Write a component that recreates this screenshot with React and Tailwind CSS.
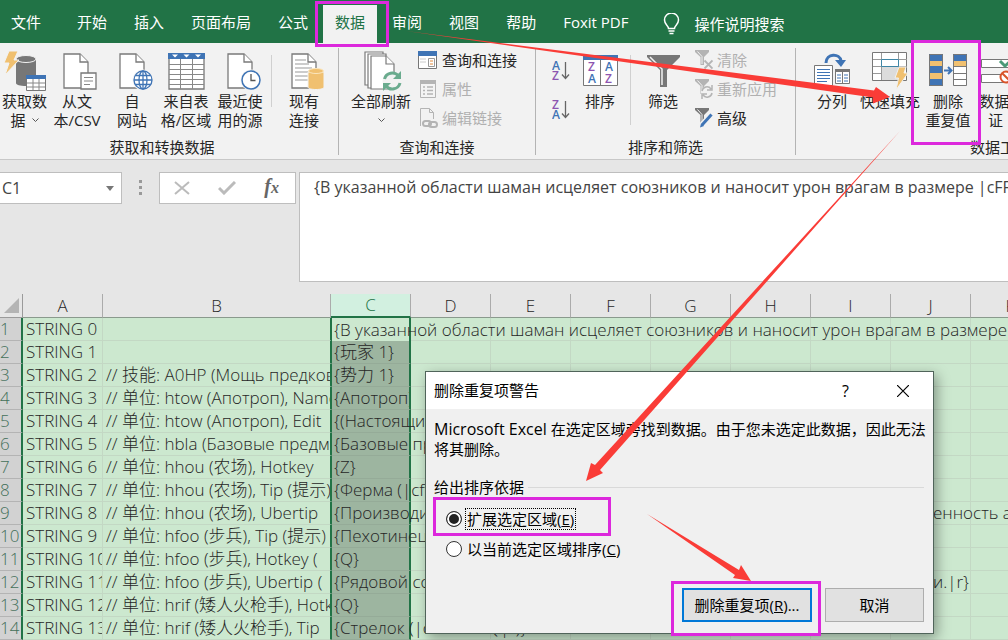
const TABS = ['开始', '插入', '页面布局', '公式', '数据', '审阅', '视图', '帮助', 'Foxit PDF']

const COLUMNS = ['A', 'B', 'C', 'D', 'E', 'F', 'G', 'H', 'I', 'J', 'K']

const FORMULA =
  '{В указанной области шаман исцеляет союзников и наносит урон врагам в размере |cFF00'

const ROWS = [
  { a: 'STRING 0', b: '', c: '{В указанной области шаман исцеляет союзников и наносит урон врагам в размере' },
  { a: 'STRING 1', b: '', c: '{玩家 1}' },
  { a: 'STRING 2', b: '// 技能: A0HP (Мощь предков)', c: '{势力 1}' },
  { a: 'STRING 3', b: '// 单位: htow (Апотроп), Name', c: '{Апотроп}', clip: true },
  { a: 'STRING 4', b: '// 单位: htow (Апотроп), Edit', c: '{(Настоящий)}' },
  { a: 'STRING 5', b: '// 单位: hbla (Базовые предметы)', c: '{Базовые предметы}' },
  { a: 'STRING 6', b: '// 单位: hhou (农场), Hotkey', c: '{Z}' },
  { a: 'STRING 7', b: '// 单位: hhou (农场), Tip (提示)', c: '{Ферма (|cffffcc00Z|r)}' },
  { a: 'STRING 8', b: '// 单位: hhou (农场), Ubertip', c: '{Производит', j: 'енность армии' },
  { a: 'STRING 9', b: '// 单位: hfoo (步兵), Tip (提示)', c: '{Пехотинец' },
  { a: 'STRING 10', b: '// 单位: hfoo (步兵), Hotkey (', c: '{Q}' },
  { a: 'STRING 11', b: '// 单位: hfoo (步兵), Ubertip (', c: '{Рядовой солдат', j: 'и.|r}' },
  { a: 'STRING 12', b: '// 单位: hrif (矮人火枪手), Hotkey', c: '{Q}' },
  { a: 'STRING 13', b: '// 单位: hrif (矮人火枪手), Tip', c: '{Стрелок (|cffffcc00Q|r)}' },
  { a: 'STRING 14', b: '', c: '' },
]

export default function App() {
  return (
    <div className="relative flex h-screen flex-col overflow-hidden bg-[#e6e6e6] font-['Open_Sans','Noto_Sans_CJK_SC',sans-serif] text-[15px] text-[#262626]">
      <TabBar />
      <Ribbon />
      <FormulaBar />
      <Sheet />
      <Dialog />
      <Annotations />
    </div>
  )
}

function TabBar() {
  return (
    <nav className="flex h-[43px] shrink-0 items-end gap-[3px] bg-[#217346] text-white">
      <button className="mr-[9px] h-[38px] pr-3 pl-[11px] pb-1 whitespace-nowrap">文件</button>
      {TABS.map((tab) => (
        <button
          key={tab}
          className={
            tab === '数据'
              ? 'h-[38px] bg-[#f2f2f2] px-3 pb-1 whitespace-nowrap text-[#217346]'
              : 'h-[38px] px-3 pb-1 whitespace-nowrap'
          }
        >
          {tab}
        </button>
      ))}
      <button className="ml-5 flex h-[38px] items-center gap-[14px] whitespace-nowrap">
        <svg width="17" height="22" viewBox="0 0 17 22" fill="none" stroke="#fff" strokeWidth="1.5">
          <path d="M5.500 15.500c0-3-4-4-4-8.500a7 7 0 0 1 14 0c0 4.500-4 5.500-4 8.500zM5.500 18h6M6.500 20.500h4" />
        </svg>
        操作说明搜索
      </button>
    </nav>
  )
}

function Ribbon() {
  return (
    <div className="flex h-[117px] shrink-0 overflow-hidden border-b border-[#c8c8c8] bg-[#f2f2f2] pt-[5px] pb-1">
      <Group label="获取和转换数据" className="w-[339px]" labelClass="pr-[14px]">
        <BigButton icon={<GetDataIcon />} lines={['获取数', '据']} menu className="w-[49px]" />
        <BigButton icon={<TextFileIcon />} lines={['从文', '本/CSV']} className="w-[56px]" />
        <BigButton icon={<WebIcon />} lines={['自', '网站']} className="w-[54px]" />
        <BigButton icon={<TableIcon />} lines={['来自表', '格/区域']} className="w-[54px]" />
        <BigButton icon={<RecentIcon />} lines={['最近使', '用的源']} className="w-[54px]" />
        <Divider className="mx-1" />
        <BigButton icon={<ConnectionIcon />} lines={['现有', '连接']} className="w-[56px]" />
      </Group>
      <Group label="查询和连接" className="w-[197px]">
        <BigButton icon={<RefreshIcon />} lines={['全部刷新', '']} menu className="ml-2 w-[68px]" />
        <div className="flex flex-col gap-[9px] pt-[2px] pl-[3px]">
          <SmallButton icon={<QueriesIcon />}>查询和连接</SmallButton>
          <SmallButton icon={<PropertiesIcon />} disabled>属性</SmallButton>
          <SmallButton icon={<EditLinkIcon />} disabled>编辑链接</SmallButton>
        </div>
      </Group>
      <Group label="排序和筛选" className="w-[260px]">
        <div className="flex flex-col gap-[17px] pt-3 pl-4">
          <button aria-label="升序"><SortIcon top="A" bottom="Z" /></button>
          <button aria-label="降序"><SortIcon top="Z" bottom="A" /></button>
        </div>
        <BigButton icon={<SortDialogIcon />} lines={['排序']} className="w-[60px]" />
        <Divider tall />
        <BigButton icon={<FunnelIcon />} lines={['筛选']} className="w-[64px]" />
        <div className="flex flex-col gap-[9px] pt-[2px]">
          <SmallButton icon={<SmallFunnel kind="clear" />} disabled>清除</SmallButton>
          <SmallButton icon={<SmallFunnel kind="reapply" />} disabled>重新应用</SmallButton>
          <SmallButton icon={<SmallFunnel kind="advanced" />}>高级</SmallButton>
        </div>
      </Group>
      <div className="flex min-w-0 flex-1 flex-col overflow-hidden">
        <div className="flex flex-1 pl-[7px]">
          <BigButton icon={<SplitIcon />} lines={['分列']} className="w-[58px]" />
          <BigButton icon={<FlashFillIcon />} lines={['快速填充']} className="w-[58px]" />
          <BigButton icon={<DuplicatesIcon />} lines={['删除', '重复值']} className="w-[58px]" />
          <BigButton icon={<ValidationIcon />} lines={['数据验', '证']} menu className="w-[50px]" />
        </div>
        <div className="h-5 pl-[174px] leading-6 whitespace-nowrap">数据工具</div>
      </div>
    </div>
  )
}

function Group({ label, className, labelClass = '', children }) {
  return (
    <div className={`flex shrink-0 flex-col border-r border-[#b4b4b4] ${className}`}>
      <div className="flex flex-1">{children}</div>
      <div className={`h-5 text-center leading-6 ${labelClass}`}>{label}</div>
    </div>
  )
}

function Divider({ tall, className = '' }) {
  return <div className={`mt-[7px] w-px bg-[#d0d0d0] ${tall ? 'h-[70px]' : 'h-[52px]'} ${className}`} />
}

function BigButton({ icon, lines, menu, className }) {
  return (
    <button className={`flex shrink-0 flex-col items-center pt-[2px] leading-[19px] whitespace-nowrap ${className}`}>
      <span className="flex h-[42px] items-center">{icon}</span>
      <span>{lines[0]}</span>
      {lines.length > 1 && (
        <span className="flex h-[19px] items-center gap-[6px]">
          {lines[1]}
          {menu && <Chevron />}
        </span>
      )}
    </button>
  )
}

function SmallButton({ icon, disabled, children }) {
  return (
    <button
      disabled={disabled}
      className="flex h-5 items-center gap-1 leading-5 whitespace-nowrap disabled:text-[#b0b0b0]"
    >
      {icon}
      {children}
    </button>
  )
}

function FormulaBar() {
  return (
    <div className="flex h-[134px] shrink-0 items-start pt-3">
      <div className="flex h-8 w-[122px] items-center border border-l-0 border-[#bebebe] bg-white pr-[7px]">
        <input
          aria-label="名称框"
          defaultValue="C1"
          className="w-full min-w-0 pl-[2px] text-base text-[#444] outline-none"
        />
        <button aria-label="打开名称框">
          <svg width="8" height="5" viewBox="0 0 8 5"><path d="M0 0h8L4 5z" fill="#777" /></svg>
        </button>
      </div>
      <svg className="mx-[17px] mt-[8px] shrink-0" width="3" height="15" viewBox="0 0 3 15" fill="#999">
        <path d="M0 0h3v3H0zM0 6h3v3H0zM0 12h3v3H0z" />
      </svg>
      <div className="flex h-8 w-[137px] items-center justify-between border border-[#bebebe] bg-white pr-4 pl-[14px]">
        <button aria-label="取消输入">
          <svg width="16" height="14" viewBox="0 0 16 14" stroke="#bbb" strokeWidth="2"><path d="M1 1l14 12M15 1L1 13" /></svg>
        </button>
        <button aria-label="输入">
          <svg width="18" height="14" viewBox="0 0 18 14" fill="none" stroke="#bbb" strokeWidth="3"><path d="M1 7l5 5L17 1" /></svg>
        </button>
        <button aria-label="插入函数" className="font-['Liberation_Serif',serif] text-xl leading-5 font-bold text-[#666] italic">
          f<span className="text-base">x</span>
        </button>
      </div>
      <textarea
        aria-label="编辑栏"
        wrap="off"
        defaultValue={FORMULA}
        className="ml-[3px] h-[110px] min-w-0 flex-1 resize-none overflow-hidden border border-r-0 border-[#bebebe] bg-white px-[14px] py-1 text-base leading-5 text-[#444] outline-none"
      />
    </div>
  )
}

function Sheet() {
  return (
    <div className="min-h-0 flex-1 overflow-hidden">
      <table className="w-[1051px] table-fixed border-separate border-spacing-0 font-['Open_Sans','Noto_Sans_CJK_SC',sans-serif] text-[17px] leading-[22px] font-light">
        <colgroup>
          <col className="w-[23px]" />
          <col className="w-[80px]" />
          <col className="w-[228px]" />
          {COLUMNS.slice(2).map((name) => (
            <col key={name} className="w-[80px]" />
          ))}
        </colgroup>
        <thead>
          <tr className="h-[23px]">
            <th className="border-r border-b border-[#9a9a9a] p-0">
              <svg className="ml-1" width="15" height="15" viewBox="0 0 15 15"><path d="M15 0v15H0z" fill="#b4b4b4" /></svg>
            </th>
            {COLUMNS.map((name) => (
              <th
                key={name}
                className={
                  name === 'C'
                    ? 'border-r border-b-2 border-r-[#ababab] border-b-[#217346] bg-[#d2f0e0] p-0 font-light text-[#217346]'
                    : 'border-r border-b border-r-[#ababab] border-b-[#8a9a8d] p-0 font-light'
                }
              >
                {name}
              </th>
            ))}
          </tr>
        </thead>
        <tbody className="bg-[#cce8cf]">
          {ROWS.map((row, i) => (
            <tr key={row.a} className="h-[23px] whitespace-nowrap">
              <th className="overflow-hidden border-r-2 border-b border-r-[#217346] border-b-[#b4b4b4] bg-[#d2d2d2] p-0 text-left font-light text-[#44705a]">
                {i + 1}
              </th>
              <td className="overflow-hidden border-r border-b border-[#c3d8c4] p-0 pl-[3px]">{row.a}</td>
              <td className="overflow-hidden border-r border-b border-r-[#217346] border-b-[#c3d8c4] p-0 pl-[3px]">{row.b}</td>
              <td
                className={
                  i === 0
                    ? 'border-r-2 border-l border-[#217346] p-0 pl-[2px]'
                    : 'border-r-2 border-b border-l border-x-[#217346] border-b-[#95ab98] bg-[#9db5a0] p-0 pl-[2px]'
                }
              >
                <div className={row.clip ? 'overflow-hidden' : 'relative w-0'}>{row.c}</div>
              </td>
              {COLUMNS.slice(3).map((name) => (
                <td key={name} className="border-r border-b border-[#c3d8c4] p-0">
                  {name === 'J' && row.j && <div className="relative w-0 pl-[42px]">{row.j}</div>}
                </td>
              ))}
            </tr>
          ))}
        </tbody>
      </table>
    </div>
  )
}

function Dialog() {
  return (
    <div
      role="dialog"
      aria-labelledby="dialog-title"
      className="absolute top-[371px] left-[425px] w-[509px] border border-[#50645a] bg-[#f0f0f0] text-black shadow-[3px_4px_12px_rgba(0,0,0,0.35)]"
    >
      <div className="flex h-[37px] items-center bg-white pr-6 pl-2">
        <h2 id="dialog-title" className="flex-1">删除重复项警告</h2>
        <button aria-label="帮助" className="mr-12 text-base">?</button>
        <button aria-label="关闭">
          <svg width="12" height="12" viewBox="0 0 12 12" stroke="#000" strokeWidth="1.2"><path d="M0 0l12 12M12 0L0 12" /></svg>
        </button>
      </div>
      <div className="pt-[10px] pr-[9px] pb-[11px] pl-2">
        <p className="leading-5 whitespace-nowrap">
          <span className="text-base leading-5">Microsoft Excel </span>
          在选定区域旁找到数据。由于您未选定此数据，因此无法
          <br />
          将其删除。
        </p>
        <fieldset className="mt-[18px]">
          <legend className="flex w-full items-center gap-1 leading-5 after:h-px after:flex-1 after:bg-[#d9d9d9]">
            给出排序依据
          </legend>
          <div className="mt-[11px] flex flex-col gap-2 pl-3">
            <Choice id="expand" defaultChecked text="扩展选定区域" hotkey="E" />
            <Choice id="current" text="以当前选定区域排序" hotkey="C" />
          </div>
        </fieldset>
        <div className="mt-7 flex justify-end gap-[13px]">
          <button className="h-[34px] w-[130px] border-2 border-[#0078d7] bg-[#e1e1e1]">
            删除重复项(<u>R</u>)...
          </button>
          <button className="h-[34px] w-[99px] border border-[#adadad] bg-[#e1e1e1]">取消</button>
        </div>
      </div>
    </div>
  )
}

function Choice({ id, text, hotkey, defaultChecked }) {
  return (
    <div className="flex items-center gap-[3px]">
      <input
        type="radio"
        name="scope"
        id={id}
        defaultChecked={defaultChecked}
        className="size-4 appearance-none rounded-full border border-[#333] bg-white checked:bg-[#222] checked:shadow-[inset_0_0_0_2px_#fff]"
      />
      <label
        htmlFor={id}
        className={
          defaultChecked
            ? 'border border-dotted border-black px-px leading-5'
            : 'border border-transparent px-px leading-5'
        }
      >
        {text}(<u>{hotkey}</u>)
      </label>
    </div>
  )
}

// magenta frames and red arrows pointing through the steps
function Annotations() {
  return (
    <div className="pointer-events-none absolute inset-0">
      <div className="absolute top-px left-[315px] h-[46px] w-[74px] border-3 border-[#dc28dc]" />
      <div className="absolute top-[40px] left-[911px] h-[105px] w-[70px] border-3 border-[#dc28dc]" />
      <div className="absolute top-[497px] left-[433px] h-[39px] w-[178px] border-3 border-[#dc28dc]" />
      <div className="absolute top-[581px] left-[671px] h-[55px] w-[150px] border-3 border-[#dc28dc]" />
      <svg className="absolute top-0 left-0" width="1008" height="640" viewBox="0 0 1008 640" fill="#fa3c37">
        <path d="M406 31L874 90.500L876 87L890 97L873 103.500L873 97.500Z" />
        <path d="M900 131L595 465L591 463L586 481L603 473L600 470Z" />
        <path d="M647 514L739 570L741 565L751 581L733 578L735 575Z" />
      </svg>
    </div>
  )
}

function Page({ x = 1 }) {
  return (
    <g fill="#fff" stroke="#7a7a7a" strokeWidth="1.300">
      <path d={`M${x} 2h16l8 8v26h-24z`} />
      <path d={`M${x + 16} 2v8h8`} />
    </g>
  )
}

function GetDataIcon() {
  return (
    <svg width="42" height="40" viewBox="0 0 42 40">
      <path d="M12 9v23c0 2 4 3 10 3s10-1 10-3V9z" fill="#777" />
      <ellipse cx="22" cy="8" rx="10" ry="3.500" fill="#777" stroke="#f2f2f2" />
      <path d="M5 0h9l-4 9h5L1 24l4-12H0z" fill="#f0c070" stroke="#f2f2f2" />
      <path d="M22.500 24.500h19v15h-19z" fill="#fff" stroke="#777" />
      <path d="M22 24h20v4H22z" fill="#3f74b5" />
      <path d="M23 32h18M23 36h18M29 28v11M35 28v11" stroke="#888" />
    </svg>
  )
}

function TextFileIcon() {
  return (
    <svg width="40" height="38" viewBox="-6 0 40 38">
      <Page />
      <path d="M18 21h15v16H18z" fill="#fff" stroke="#777" strokeWidth="1.300" />
      <path d="M21 25.500h9M21 29h9M21 32.500h6" stroke="#888" />
    </svg>
  )
}

function WebIcon() {
  return (
    <svg width="42" height="38" viewBox="-8 0 42 38">
      <Page />
      <circle cx="24" cy="28" r="10.500" fill="#f2f2f2" />
      <g fill="#fff" stroke="#3f74b5" strokeWidth="1.300">
        <circle cx="24" cy="28" r="9" />
        <ellipse cx="24" cy="28" rx="4" ry="9" />
        <path d="M15 28h18M16.500 23.500h15M16.500 32.500h15M24 19v18" />
      </g>
    </svg>
  )
}

function TableIcon() {
  return (
    <svg width="37" height="37" viewBox="0 0 37 37">
      <path d="M1 1h35v35H1z" fill="#fff" stroke="#777" strokeWidth="1.300" />
      <path d="M1 11.500h35M1 16.500h35M1 21.500h35M1 26.500h35M1 31.500h35M12.500 6v30M24.500 6v30" stroke="#888" />
      <path d="M0 0h37v6H0z" fill="#3f74b5" />
      <path d="M4 1.500h6l-3 3zM15.500 1.500h6l-3 3zM27 1.500h6l-3 3z" fill="#fff" />
    </svg>
  )
}

function RecentIcon() {
  return (
    <svg width="42" height="38" viewBox="-8 0 42 38">
      <Page />
      <circle cx="24" cy="28" r="10.500" fill="#f2f2f2" />
      <circle cx="24" cy="28" r="9" fill="#fff" stroke="#3f74b5" strokeWidth="1.500" />
      <path d="M24 22v6.500h4.500" fill="none" stroke="#555" strokeWidth="1.300" />
    </svg>
  )
}

function ConnectionIcon() {
  return (
    <svg width="42" height="38" viewBox="-8 0 42 38">
      <Page />
      <path d="M4 8h11M4 12h14M4 16h17M4 20h13M4 24h13M4 28h13" stroke="#999" />
      <path d="M17 20v15c0 1.500 3 2.500 8 2.500s8-1 8-2.500V20z" fill="#f0c070" stroke="#f2f2f2" />
      <ellipse cx="25" cy="19" rx="7.500" ry="2.500" fill="#f0c070" stroke="#fbe6bd" />
    </svg>
  )
}

function RefreshIcon() {
  return (
    <svg width="42" height="40" viewBox="-4 0 42 40">
      <g fill="#fff" stroke="#7a7a7a" strokeWidth="1.200">
        <path d="M1 1h18v33H1z" />
        <path d="M4 3h18v34H4z" />
        <path d="M7 5h15l8 8v25H7z" />
        <path d="M22 5v8h8" />
      </g>
      <circle cx="28" cy="30" r="9.500" fill="#f2f2f2" />
      <g fill="none" stroke="#6aab8e" strokeWidth="3">
        <path d="M20.500 28a8 8 0 0 1 14-3M36 32a8 8 0 0 1-14 3" />
      </g>
      <path d="M37 20v8h-8zM19 40v-8h8z" fill="#6aab8e" />
    </svg>
  )
}

function Chevron() {
  return (
    <svg width="7" height="5" viewBox="0 0 7 5" fill="none" stroke="#555"><path d="M0.500 0.500l3 3 3-3" /></svg>
  )
}

function QueriesIcon() {
  return (
    <svg width="20" height="19" viewBox="0 0 20 19">
      <path d="M0.500 0.500h18v17h-18z" fill="#fff" stroke="#777" />
      <path d="M0 0h19v5H0z" fill="#3f74b5" />
      <path d="M10.500 7.500h6v8h-6z" fill="#fff" stroke="#999" />
      <path d="M2 8h6M2 11h6" stroke="#ccc" />
      <path d="M12 10h3M12 13h3" stroke="#e0893c" />
    </svg>
  )
}

function PropertiesIcon() {
  return (
    <svg width="20" height="19" viewBox="0 0 20 19">
      <path d="M2.500 0.500h15v17h-15z" fill="#f4f4f4" stroke="#b4b4b4" />
      <path d="M2 0h16v4H2z" fill="#b4b4b4" />
      <path d="M5 7h2M5 10.500h2M5 14h2M9 7h6M9 10.500h6M9 14h6" stroke="#b4b4b4" strokeWidth="1.500" />
    </svg>
  )
}

function EditLinkIcon() {
  return (
    <svg width="20" height="20" viewBox="0 0 20 20" fill="none" stroke="#b4b4b4">
      <path d="M2.500 18V0.500h9l4 4V11M11.500 0.500v4h4" />
      <rect x="5" y="13" width="8" height="5" rx="2.500" strokeWidth="2" />
      <rect x="11" y="14" width="8" height="5" rx="2.500" strokeWidth="2" />
    </svg>
  )
}

function SortIcon({ top, bottom }) {
  return (
    <svg width="18" height="22" viewBox="0 0 18 22" fontFamily="Open Sans, sans-serif" fontSize="12" fontWeight="600">
      <text x="0" y="10" fill={top === 'A' ? '#3f74b5' : '#8d55b0'}>{top}</text>
      <text x="0" y="20" fill={bottom === 'A' ? '#3f74b5' : '#8d55b0'}>{bottom}</text>
      <path d="M13.500 2v16M10 14.500l3.500 4 3.500-4" fill="none" stroke="#666" strokeWidth="1.300" />
    </svg>
  )
}

function SortDialogIcon() {
  return (
    <svg width="35" height="32" viewBox="0 0 35 32" fontFamily="Open Sans, sans-serif" fontSize="12" fontWeight="600">
      <path d="M0.500 0.500h34v30h-34zM17.500 3v28" fill="#fff" stroke="#777" />
      <path d="M0 0h35v5H0z" fill="#3f74b5" />
      <text x="5" y="16" fill="#8d55b0">Z</text>
      <text x="5" y="28" fill="#3f74b5">A</text>
      <text x="22" y="16" fill="#3f74b5">A</text>
      <text x="22" y="28" fill="#8d55b0">Z</text>
    </svg>
  )
}

function FunnelIcon() {
  return (
    <svg width="33" height="33" viewBox="0 0 33 33">
      <path d="M0 0h33v2L20 15v17h-7V15L0 2z" fill="#777" />
      <path d="M3 2l12 12v16" fill="none" stroke="#f2f2f2" strokeWidth="1.500" />
    </svg>
  )
}

function SmallFunnel({ kind }) {
  const tone = kind === 'advanced' ? '#777' : '#b4b4b4'
  return (
    <svg width="18" height="20" viewBox="0 0 18 20" fill="none">
      <path d="M0 0h14v2L9 7v8H5.500V7L0 2z" fill={tone} />
      <path d="M2.500 1.500L7 6.500V14" stroke="#f2f2f2" />
      {kind === 'clear' && <path d="M9.500 10.500l8 8M17.500 10.500l-8 8" stroke={tone} strokeWidth="1.800" />}
      {kind === 'reapply' && (
        <g stroke={tone} strokeWidth="2">
          <circle cx="12" cy="13" r="6" fill="#f2f2f2" stroke="none" />
          <path d="M7 12a5 5 0 0 1 9-2M17 14a5 5 0 0 1-9 2M17 6v5h-5M7 20v-5h5" strokeWidth="1.500" />
        </g>
      )}
      {kind === 'advanced' && (
        <g>
          <path d="M16.500 6.500L7 17" stroke="#f2f2f2" strokeWidth="6" />
          <path d="M16.500 6.500L7 17" stroke="#3f74b5" strokeWidth="3" />
          <path d="M5 19.500l1-4 3 2.500z" fill="#3f74b5" />
        </g>
      )}
    </svg>
  )
}

function SplitIcon() {
  return (
    <svg width="36" height="36" viewBox="0 0 36 36">
      <path d="M0.500 12.500h18v20h-18z" fill="#fff" stroke="#777" />
      <path d="M3 16.500h13M3 19.500h13M3 22.500h13M3 25.500h13M3 28.500h10" stroke="#3f74b5" />
      <path d="M21.500 16.500h14v14h-14zM28.500 17v13" fill="#fff" stroke="#777" />
      <path d="M21 16h15v3H21z" fill="#777" />
      <path d="M23 22h4M23 25h4M23 28h4M30 22h4M30 25h4M30 28h4" stroke="#3f74b5" />
      <path d="M12 10c0-10 14-10 15-2" fill="none" stroke="#3f74b5" strokeWidth="3" />
      <path d="M21 7h11l-5 7z" fill="#3f74b5" />
    </svg>
  )
}

function FlashFillIcon() {
  return (
    <svg width="36" height="40" viewBox="0 0 36 40">
      <path d="M0.500 1.500h34v28h-34z" fill="#fff" stroke="#777" />
      <path d="M1 8.500h34M1 15.500h34M1 22.500h34M9.500 2v27M26.500 2v27" stroke="#999" />
      <path d="M10 16h16v13H10z" fill="#dcdcdc" />
      <path d="M9.500 8.500h17v7h-17z" fill="#fff" stroke="#3f86a5" />
      <path d="M27 16h7l-2 6h4L24 39l2.500-12H23z" fill="#f0c070" stroke="#f2f2f2" />
    </svg>
  )
}

function DuplicatesIcon() {
  return (
    <svg width="38" height="34" viewBox="0 0 38 34">
      <path d="M0 0h14v32H0z" fill="#3f74b5" />
      <path d="M0 7h14v5H0zM0 19h14v6H0z" fill="#f0c070" />
      <path d="M0.500 0.500h13v31h-13z" fill="none" stroke="#777" />
      <path d="M24.500 0.500h13v31h-13z" fill="#fff" />
      <path d="M24 0h14v7H24z" fill="#3f74b5" />
      <path d="M24 7h14v5H24z" fill="#f0c070" />
      <path d="M24.500 0.500h13v31h-13zM24 12.500h14M24 19.500h14M24 25.500h14" fill="none" stroke="#777" />
      <path d="M15 16.500h7M19 13l3.500 3.500L19 20" fill="none" stroke="#3f74b5" strokeWidth="2" />
    </svg>
  )
}

function ValidationIcon() {
  return (
    <svg width="42" height="28" viewBox="0 0 42 28">
      <path d="M0.500 2.500h32v8h-32zM0.500 17.500h32v8h-32z" fill="#fff" stroke="#777" />
      <path d="M19 4l5 5L34 0" fill="none" stroke="#4a9a78" strokeWidth="3" />
      <circle cx="25" cy="20" r="5.500" fill="#fff" stroke="#d9542b" strokeWidth="2" />
      <path d="M21 16l8 8" stroke="#d9542b" strokeWidth="2" />
    </svg>
  )
}
